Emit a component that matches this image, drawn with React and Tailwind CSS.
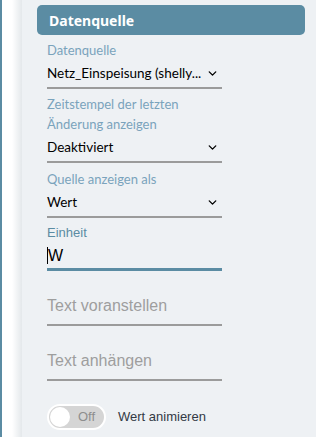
import { ChevronDown } from "lucide-react";

const sans = "font-['Lato','Noto_Sans',sans-serif]";
const head = "font-['Noto_Sans','Open_Sans',sans-serif]";
const arial = "font-['Liberation_Sans',Arial,sans-serif]";

function SelectField({ label, value }) {
  return (
    <div className="flex flex-col">
      <div className={`${sans} text-[13px] leading-[20px] text-[#7aa3bc]`}>{label}</div>
      <div className="flex h-[27px] items-center justify-between gap-[5px] border-b-2 border-[#9b9b9b] box-content">
        <span className={`${sans} whitespace-nowrap text-[13.5px] text-black`}>{value}</span>
        <ChevronDown size={13} strokeWidth={2.5} className="mr-[3px] shrink-0 text-black" />
      </div>
    </div>
  );
}

export default function App() {
  return (
    <div className="flex h-[437px] w-[316px] overflow-hidden">
      <div className="w-[2px] bg-[#5b8ca3]" />
      <div className="w-[20px] bg-gradient-to-r from-white via-white to-[#e4e8eb]" />
      <div className="flex-1 bg-[#eef1f4] pl-[15px] pr-[11px] pt-[5px]">
        <div className={`${head} flex h-[30px] items-center rounded-[5px] bg-[#5b8ca3] pl-[12px] text-[14px] font-bold text-white`}>
          Datenquelle
        </div>

        <div className="ml-[10px] mt-[5px] flex w-[175px] flex-col">
          <SelectField label="Datenquelle" value="Netz_Einspeisung (shelly..." />
          <div className="mt-[5px]">
            <SelectField
              label={<>Zeitstempel der letzten<br />Änderung anzeigen</>}
              value="Deaktiviert"
            />
          </div>
          <div className="mt-[6px]">
            <SelectField label="Quelle anzeigen als" value="Wert" />
          </div>

          <div className="mt-[5px] flex flex-col">
            <div className={`${arial} text-[13px] leading-[20px] text-[#5b8ca3]`}>Einheit</div>
            <div className="flex h-[25px] items-center border-b-[3px] border-[#5b8ca3] box-content">
              <span className="h-[17px] w-px bg-black" />
              <span className={`${arial} text-[16px] text-black`}>W</span>
            </div>
          </div>

          <div className="mt-[17px] flex h-[36px] items-center border-b-2 border-[#9b9b9b] box-content">
            <span className={`${arial} text-[16px] text-[#9e9e9e]`}>Text voranstellen</span>
          </div>

          <div className="mt-[17px] flex h-[36px] items-center border-b-2 border-[#9b9b9b] box-content">
            <span className={`${arial} text-[16px] text-[#9e9e9e]`}>Text anhängen</span>
          </div>

          <div className="mt-[23px] flex items-center gap-[12px]">
            <div className="flex h-[26px] w-[59px] items-center rounded-full border-2 border-white bg-[#d5d5d5] pl-[1px]">
              <span className="h-[20px] w-[20px] rounded-full bg-white" />
              <span className={`${arial} ml-[8px] text-[13px] text-[#8e8e8e]`}>Off</span>
            </div>
            <span className={`${arial} text-[13px] text-[#333a44]`}>Wert animieren</span>
          </div>
        </div>
      </div>
    </div>
  );
}
